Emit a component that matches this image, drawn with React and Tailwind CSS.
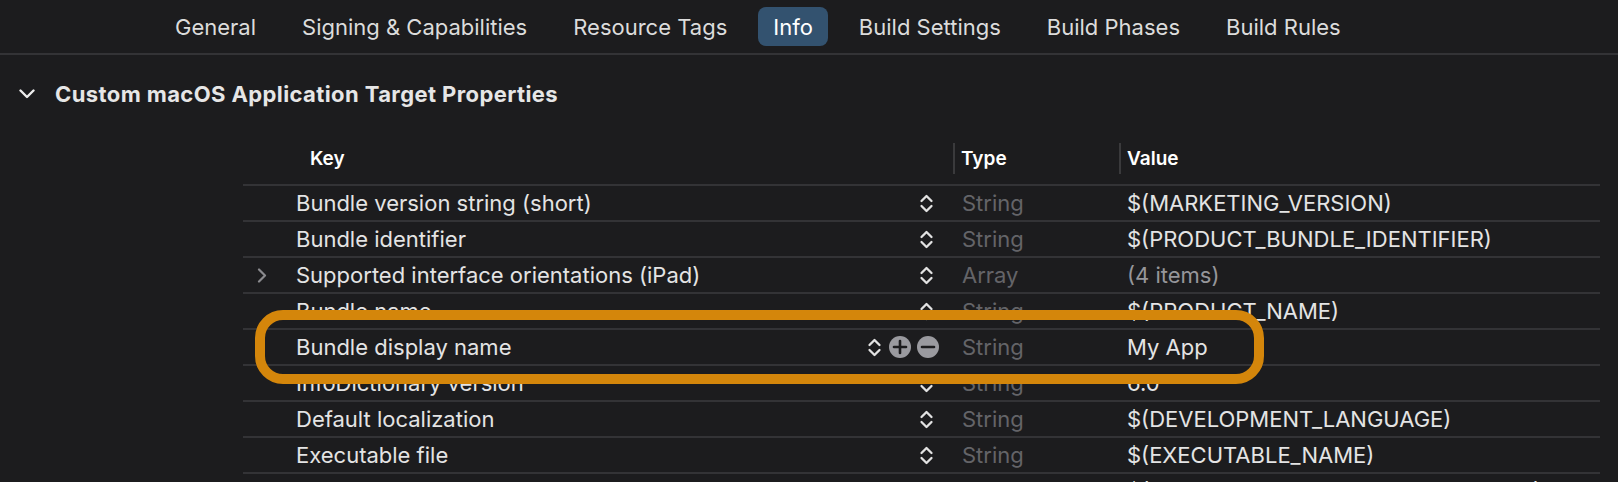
import React from "react";

const tabs = ["General", "Signing & Capabilities", "Resource Tags", "Info", "Build Settings", "Build Phases", "Build Rules"];

const rows = [
  { key: "Bundle version string (short)", type: "String", value: "$(MARKETING_VERSION)" },
  { key: "Bundle identifier", type: "String", value: "$(PRODUCT_BUNDLE_IDENTIFIER)" },
  { key: "Supported interface orientations (iPad)", type: "Array", value: "(4 items)", expandable: true, dimValue: true },
  { key: "Bundle name", type: "String", value: "$(PRODUCT_NAME)" },
  { key: "Bundle display name", type: "String", value: "My App", selected: true },
  { key: "InfoDictionary version", type: "String", value: "6.0" },
  { key: "Default localization", type: "String", value: "$(DEVELOPMENT_LANGUAGE)" },
  { key: "Executable file", type: "String", value: "$(EXECUTABLE_NAME)" },
  { key: "Bundle OS Type code", type: "String", value: "$(PRODUCT_BUNDLE_PACKAGE_TYPE)" },
];

function Stepper() {
  return (
    <svg width="15" height="21" viewBox="0 0 15 21" fill="none" stroke="#e2e2e2" strokeWidth="2.3" strokeLinecap="round" strokeLinejoin="round">
      <path d="M2.5 8 L7.5 3 L12.5 8" />
      <path d="M2.5 13 L7.5 18 L12.5 13" />
    </svg>
  );
}

function CircleBtn({ minus }) {
  return (
    <svg width="22" height="22" viewBox="0 0 22 22">
      <circle cx="11" cy="11" r="11" fill="#9a9a9f" />
      <path d="M5 11 H17" stroke="#1c1c1e" strokeWidth="2.6" strokeLinecap="round" />
      {!minus && <path d="M11 5 V17" stroke="#1c1c1e" strokeWidth="2.6" strokeLinecap="round" />}
    </svg>
  );
}

export default function App() {
  return (
    <div
      className="relative w-[1618px] h-[482px] overflow-hidden bg-[#1c1c1e] text-[#dedede]"
      style={{ fontFamily: "Inter, 'Noto Sans', sans-serif" }}
    >
      {/* Tab bar */}
      <div className="h-[55px] border-b-2 border-[#333336] flex items-center pl-[160px] gap-[16px]">
        {tabs.map((t) => (
          <div
            key={t}
            className={
              "h-[39px] px-[15px] flex items-center rounded-[8px] text-[22px] leading-none " +
              (t === "Info" ? "bg-[#33526f] text-white" : "text-[#dcdcdc]")
            }
          >
            {t}
          </div>
        ))}
      </div>

      {/* Section header */}
      <div className="h-[77px] flex items-center pl-[19px]">
        <svg width="16" height="10" viewBox="0 0 16 10" fill="none" stroke="#ededed" strokeWidth="2.4" strokeLinecap="round" strokeLinejoin="round">
          <path d="M1.5 1.5 L8 8 L14.5 1.5" />
        </svg>
        <div className="ml-[20px] text-[22px] tracking-[0.4px] font-bold text-[#e6e6e6] leading-none">
          Custom macOS Application Target Properties
        </div>
      </div>

      {/* Table */}
      <div className="ml-[243px] w-[1357px]">
        {/* header */}
        <div className="h-[52px] flex items-center text-[19px] font-semibold text-white leading-none">
          <div className="w-[710px] pl-[67px]">Key</div>
          <div className="w-[166px] h-[31px] border-l-2 border-[#3a3a3c] flex items-center pl-[6px]">Type</div>
          <div className="flex-1 h-[31px] border-l-2 border-[#3a3a3c] flex items-center pl-[6px]">Value</div>
        </div>

        {rows.map((r) => (
          <div key={r.key} className="h-[36px] border-t-2 border-[#333336] flex items-center text-[22px] leading-none">
            <div className="w-[53px] flex items-center pl-[14px]">
              {r.expandable && (
                <svg width="10" height="15" viewBox="0 0 10 15" fill="none" stroke="#8a8a8e" strokeWidth="2.2" strokeLinecap="round" strokeLinejoin="round">
                  <path d="M2 1.5 L8 7.5 L2 13.5" />
                </svg>
              )}
            </div>
            <div className="w-[648px] flex items-center">
              <div className="flex-1 text-[#e4e4e4] whitespace-nowrap">{r.key}</div>
              {r.selected ? (
                <div className="flex items-center mr-[5px]">
                  <Stepper />
                  <div className="ml-[7px]"><CircleBtn /></div>
                  <div className="ml-[6px]"><CircleBtn minus /></div>
                </div>
              ) : (
                <div className="mr-[10px] flex items-center"><Stepper /></div>
              )}
            </div>
            <div className="w-[183px] pl-[18px] text-[#646468]">{r.type}</div>
            <div className={"flex-1 whitespace-nowrap " + (r.dimValue ? "text-[#96969a]" : "text-[#e4e4e4]")}>{r.value}</div>
          </div>
        ))}
      </div>

      {/* Orange annotation frame */}
      <div className="absolute left-[255px] top-[310px] w-[1009px] h-[74px] border-[10px] border-[#d4860b] rounded-[28px] pointer-events-none" />
    </div>
  );
}
